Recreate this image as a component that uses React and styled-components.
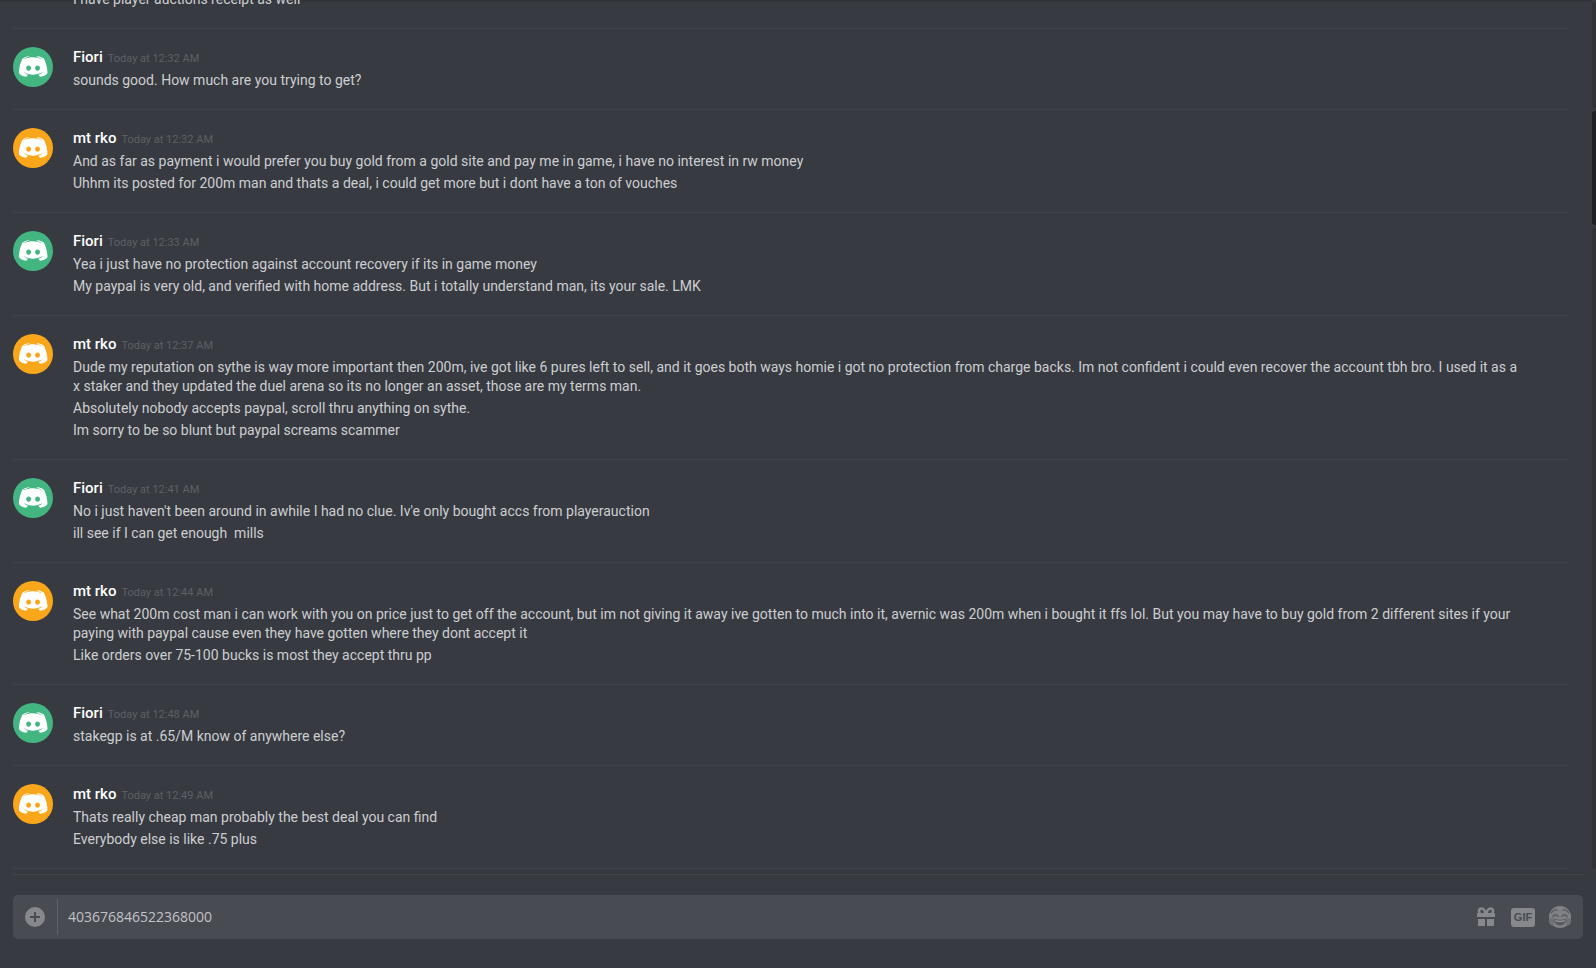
import React, { useState } from "react";
import styled, { createGlobalStyle } from "styled-components";

const GlobalStyle = createGlobalStyle`
  * {
    box-sizing: border-box;
  }

  body {
    margin: 0;
    background: #373a41;
    font-family: Roboto, "Liberation Sans", sans-serif;
  }
`;

const Page = styled.div`
  display: flex;
  flex-direction: column;
  height: 100vh;
  overflow: hidden;
  background: #373a41;
`;

const ChatArea = styled.div`
  flex: 1;
  min-height: 0;
  display: flex;
  box-shadow: inset 0 2px 1px -1px #2f3236;
`;

const MessageList = styled.main`
  flex: 1;
  min-width: 0;
  display: flex;
  flex-direction: column;
  justify-content: flex-end;
  overflow: hidden;
  padding: 0 23px 5px 13px;
`;

const Group = styled.article`
  flex: none;
  display: flex;
  gap: 20px;
  padding: 18px 0 19px;
  border-bottom: 1px solid #3f4249;
`;

const Avatar = styled.div`
  flex: none;
  width: 40px;
  height: 40px;
  border-radius: 50%;
  background: ${(props) => props.$color || "transparent"};

  svg {
    display: block;
    width: 40px;
    height: 40px;
  }
`;

const GroupBody = styled.div`
  flex: 1;
  min-width: 0;
  padding-right: 44px;
`;

const GroupHeader = styled.header`
  display: flex;
  align-items: baseline;
  gap: 5px;
  height: 21px;
  line-height: 20px;
`;

const UserName = styled.h2`
  margin: 0;
  font-size: 15px;
  font-weight: 500;
  color: #ffffff;
`;

const Timestamp = styled.time`
  font-size: 11px;
  color: #5d6065;
`;

const Message = styled.p`
  margin: 3px 0 0;
  font-size: 14px;
  line-height: 19px;
  color: #cdced0;
  white-space: pre-wrap;
`;

const Rail = styled.div`
  flex: none;
  display: flex;
  flex-direction: column;
  gap: 3px;
  width: 4px;
  padding: 2px 0 5px;
  background: #393b3f;
`;

const Track = styled.div`
  flex: ${(props) => props.$size} 0 0;
  border-radius: 3px 0 0 3px;
  background: ${(props) => (props.$thumb ? "#1e2022" : "#313337")};
`;

const Composer = styled.form`
  flex: none;
  margin: 0 13px;
  padding: 20px 0 29px;
  border-top: 1px solid #434648;
`;

const InputBar = styled.div`
  display: flex;
  align-items: center;
  height: 44px;
  padding: 0 12px;
  border-radius: 5px;
  background: #484b52;
`;

const IconButton = styled.button`
  display: flex;
  align-items: center;
  justify-content: center;
  padding: 0;
  border: 0;
  background: none;
  color: #86888c;
  cursor: pointer;
`;

const Divider = styled.div`
  width: 1px;
  height: 36px;
  margin: 0 10px 0 12px;
  background: #5e6167;
`;

const TextInput = styled.input`
  flex: 1;
  min-width: 0;
  height: 44px;
  padding: 0 0 2px;
  border: 0;
  outline: 0;
  background: none;
  color: #c2c3c5;
  font-family: "Open Sans", sans-serif;
  font-size: 14px;
`;

const Tools = styled.div`
  display: flex;
  align-items: center;
  gap: 14px;
`;

const GifBadge = styled.span`
  width: 24px;
  height: 19px;
  border-radius: 3px;
  background: #86888c;
  color: #484b52;
  font-family: "Liberation Sans", sans-serif;
  font-size: 11px;
  font-weight: 700;
  line-height: 19px;
  text-align: center;
`;

const GREEN = "#43b581";
const ORANGE = "#faa61a";

const groups = [
  // tail of an older group, its header is further up
  { messages: ["I have player auctions receipt as well"] },
  { user: "Fiori", color: GREEN, time: "12:32 AM", messages: ["sounds good. How much are you trying to get?"] },
  {
    user: "mt rko",
    color: ORANGE,
    time: "12:32 AM",
    messages: [
      "And as far as payment i would prefer you buy gold from a gold site and pay me in game, i have no interest in rw money",
      "Uhhm its posted for 200m man and thats a deal, i could get more but i dont have a ton of vouches",
    ],
  },
  {
    user: "Fiori",
    color: GREEN,
    time: "12:33 AM",
    messages: [
      "Yea i just have no protection against account recovery if its in game money",
      "My paypal is very old, and verified with home address. But i totally understand man, its your sale. LMK",
    ],
  },
  {
    user: "mt rko",
    color: ORANGE,
    time: "12:37 AM",
    messages: [
      "Dude my reputation on sythe is way more important then 200m, ive got like 6 pures left to sell, and it goes both ways homie i got no protection from charge backs. Im not confident i could even recover the account tbh bro. I used it as a x staker and they updated the duel arena so its no longer an asset, those are my terms man.",
      "Absolutely nobody accepts paypal, scroll thru anything on sythe.",
      "Im sorry to be so blunt but paypal screams scammer",
    ],
  },
  {
    user: "Fiori",
    color: GREEN,
    time: "12:41 AM",
    messages: [
      "No i just haven't been around in awhile I had no clue. Iv'e only bought accs from playerauction",
      "ill see if I can get enough  mills",
    ],
  },
  {
    user: "mt rko",
    color: ORANGE,
    time: "12:44 AM",
    messages: [
      "See what 200m cost man i can work with you on price just to get off the account, but im not giving it away ive gotten to much into it, avernic was 200m when i bought it ffs lol. But you may have to buy gold from 2 different sites if your paying with paypal cause even they have gotten where they dont accept it",
      "Like orders over 75-100 bucks is most they accept thru pp",
    ],
  },
  { user: "Fiori", color: GREEN, time: "12:48 AM", messages: ["stakegp is at .65/M know of anywhere else?"] },
  {
    user: "mt rko",
    color: ORANGE,
    time: "12:49 AM",
    messages: ["Thats really cheap man probably the best deal you can find", "Everybody else is like .75 plus"],
  },
];

function DiscordFace() {
  return (
    <svg viewBox="14 22 419 419" fill="#fff" fillRule="evenodd" aria-hidden="true">
      <path d="M375.04 295.424c0-82.432-36.864-149.248-36.864-149.248-36.864-27.648-71.936-26.88-71.936-26.88l-3.584 4.096c43.52 13.312 63.744 32.512 63.744 32.512-60.811-33.329-132.244-33.335-191.232-7.424-9.472 4.352-15.104 7.424-15.104 7.424s21.248-20.224 67.328-33.536l-2.56-3.072s-35.072-.768-71.936 26.88c0 0-36.864 66.816-36.864 149.248 0 0 21.504 37.12 78.08 38.912 0 0 9.472-11.52 17.152-21.248-32.512-9.728-44.8-30.208-44.8-30.208 3.766 2.636 9.976 6.053 10.496 6.4 43.21 24.198 104.588 32.126 159.744 8.96 8.96-3.328 18.944-8.192 29.44-15.104 0 0-12.8 20.992-46.336 30.464 7.68 9.728 16.896 20.736 16.896 20.736 56.576-1.792 78.336-38.912 78.336-38.912zM297.216 243.2c0 15.616-11.52 28.416-26.112 28.416-14.336 0-26.112-12.8-26.112-28.416s11.52-28.416 26.112-28.416c14.592 0 26.112 12.8 26.112 28.416zM177.664 214.784c-14.592 0-26.112 12.8-26.112 28.416s11.776 28.416 26.112 28.416c14.592 0 26.112-12.8 26.112-28.416.256-15.616-11.52-28.416-26.112-28.416z" />
    </svg>
  );
}

function PlusIcon() {
  return (
    <svg width="20" height="20" viewBox="0 0 20 20" aria-hidden="true">
      <circle cx="10" cy="10" r="10" fill="currentColor" />
      <path d="M10 5v10M5 10h10" stroke="#484b52" strokeWidth="2" />
    </svg>
  );
}

function GiftIcon() {
  return (
    <svg width="20" height="20" viewBox="0 0 20 20" fill="currentColor" aria-hidden="true">
      <path d="M0 6h18v4H0zM1 12h7v7H1zM10 12h7v7h-7z" />
      <path
        d="M8.500 7C8 3.500 6.500 1.500 4.500 1.500C2.500 1.500 1.700 3 2 4.500L3 7M9.500 7C10 3.500 11.500 1.500 13.500 1.500C15.500 1.500 16.300 3 16 4.500L15 7"
        fill="none"
        stroke="currentColor"
        strokeWidth="2.500"
      />
    </svg>
  );
}

function JoyIcon() {
  return (
    <svg width="22" height="22" viewBox="0 0 22 22" aria-hidden="true">
      <circle cx="11" cy="11" r="11" fill="#7f8185" />
      <path
        d="M2.500 6.500Q4.500 3.500 8 4M19.500 6.500Q17.500 3.500 14 4M4 10.500Q6.500 7 9 10.500M13 10.500Q15.500 7 18 10.500"
        fill="none"
        stroke="#56595f"
        strokeWidth="1.300"
        strokeLinecap="round"
      />
      <path d="M5 13Q11 14.500 17 13Q16.500 19.500 11 19.500Q5.500 19.500 5 13z" fill="#56595f" />
      <path d="M6 14Q11 15.300 16 14L15.500 15.600Q11 16.600 6.500 15.600z" fill="#909296" />
      <path
        d="M4.500 11.500Q0 12.500 0 15.500Q.5 19 3 19.500Q6.500 18 4.500 11.500zM17.500 11.500Q22 12.500 22 15.500Q21.500 19 19 19.500Q15.500 18 17.500 11.500z"
        fill="#6f7175"
      />
    </svg>
  );
}

function MessageGroup({ user, color, time, messages }) {
  return (
    <Group>
      <Avatar $color={color}>{user && <DiscordFace />}</Avatar>
      <GroupBody>
        {user && (
          <GroupHeader>
            <UserName>{user}</UserName>
            <Timestamp>Today at {time}</Timestamp>
          </GroupHeader>
        )}
        {messages.map((text) => (
          <Message key={text}>{text}</Message>
        ))}
      </GroupBody>
    </Group>
  );
}

// the continued group has no header, so the avatar slot must not stretch it
const Continued = styled.div`
  flex: none;
  padding: 0 44px 19px 60px;
  border-bottom: 1px solid #3f4249;
`;

export default function App() {
  const [draft, setDraft] = useState("403676846522368000");

  return (
    <Page>
      <GlobalStyle />
      <ChatArea>
        <MessageList>
          {groups.map((group, i) =>
            group.user ? (
              <MessageGroup key={i} {...group} />
            ) : (
              <Continued key={i}>
                {group.messages.map((text) => (
                  <Message key={text}>{text}</Message>
                ))}
              </Continued>
            )
          )}
        </MessageList>
        <Rail>
          <Track $size={106} />
          <Track $size={114} $thumb />
          <Track $size={640} />
        </Rail>
      </ChatArea>
      <Composer onSubmit={(e) => e.preventDefault()}>
        <InputBar>
          <IconButton type="button" aria-label="Upload a file">
            <PlusIcon />
          </IconButton>
          <Divider />
          <TextInput aria-label="Message" value={draft} onChange={(e) => setDraft(e.target.value)} />
          <Tools>
            <IconButton type="button" aria-label="Send a gift">
              <GiftIcon />
            </IconButton>
            <IconButton type="button">
              <GifBadge>GIF</GifBadge>
            </IconButton>
            <IconButton type="button" aria-label="Pick an emoji">
              <JoyIcon />
            </IconButton>
          </Tools>
        </InputBar>
      </Composer>
    </Page>
  );
}
